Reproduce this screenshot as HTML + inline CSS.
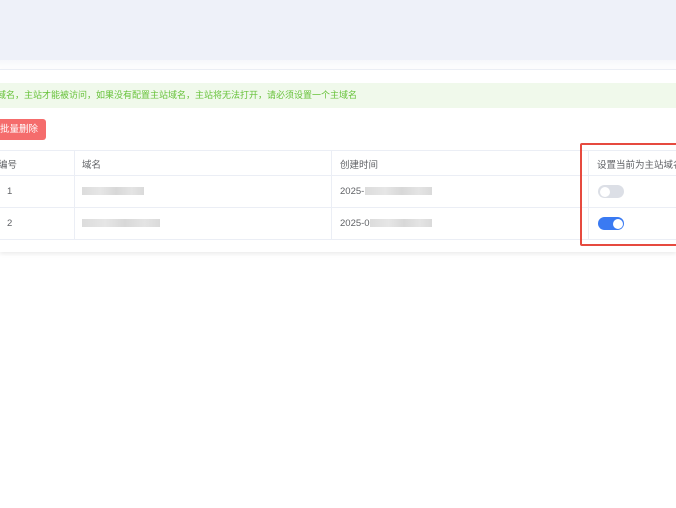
<!DOCTYPE html>
<html><head><meta charset="utf-8"><style>
*{margin:0;padding:0;box-sizing:border-box}
body{width:676px;height:508px;background:#fff;position:relative;overflow:hidden;font-family:"Liberation Sans","Noto Sans CJK SC",sans-serif;color:#606266}
.top{position:absolute;left:0;top:0;width:676px;height:60px;background:#eef1f9}
.gap{position:absolute;left:0;top:60px;width:676px;height:10px;background:linear-gradient(#f6f7fb,#fff)}
.panel{position:absolute;left:0;top:69px;width:676px;height:183px;background:#fff;box-shadow:0 2px 4px rgba(0,0,0,.08);border-top:1px solid #ebeef5}
.alert{position:absolute;left:0;top:83px;width:676px;height:25px;background:#f0f9eb;color:#67c23a;font-size:9px;line-height:25px;white-space:nowrap}
.alert span{position:absolute;left:-3px}
.btn{position:absolute;left:-6px;top:119px;width:52px;height:21px;background:#f56c6c;border-radius:3px;color:#fff;font-size:9.5px;line-height:21px;padding-left:6px}
.t{position:absolute;font-size:9.5px;white-space:nowrap}
.hl{position:absolute;left:0;width:676px;height:1px;background:#ebeef5}
.vl{position:absolute;top:150px;width:1px;height:90px;background:#ebeef5}
.blur{position:absolute;height:8px;background:linear-gradient(90deg,#dcdcdc,#e6e6e6 30%,#d8d8d8 55%,#e4e4e4 80%,#dadada)}
.sw{position:absolute;width:26px;height:13px;border-radius:7px}
.sw i{position:absolute;top:1.5px;width:10px;height:10px;border-radius:50%;background:#fff}
.red{position:absolute;left:580px;top:143px;width:100px;height:103px;border:2px solid #e64a3f;border-radius:2px}
</style></head><body>
<div class="top"></div><div class="gap"></div>
<div class="panel"></div>
<div class="alert"><span>域名，主站才能被访问，如果没有配置主站域名，主站将无法打开，请必须设置一个主域名</span></div>
<div class="btn">批量删除</div>
<div class="hl" style="top:150px"></div>
<div class="hl" style="top:175px"></div>
<div class="hl" style="top:207px"></div>
<div class="hl" style="top:239px"></div>
<div class="vl" style="left:74px"></div>
<div class="vl" style="left:331px"></div>
<div class="vl" style="left:588px"></div>
<div class="t" style="left:-2px;top:157px">编号</div>
<div class="t" style="left:82px;top:157px">域名</div>
<div class="t" style="left:340px;top:157px">创建时间</div>
<div class="t" style="left:597px;top:157px">设置当前为主站域名</div>
<div class="t" style="left:7px;top:186px">1</div>
<div class="t" style="left:7px;top:218px">2</div>
<div class="blur" style="left:82px;top:187px;width:62px"></div>
<div class="blur" style="left:82px;top:219px;width:78px"></div>
<div class="t" style="left:340px;top:186px">2025-</div>
<div class="blur" style="left:365px;top:187px;width:67px"></div>
<div class="t" style="left:340px;top:218px">2025-0</div>
<div class="blur" style="left:370px;top:219px;width:62px"></div>
<div class="sw" style="left:598px;top:185px;background:#dcdfe6"><i style="left:1.5px"></i></div>
<div class="sw" style="left:598px;top:217px;background:#3a7af2"><i style="left:14.5px"></i></div>
<div class="red"></div>
</body></html>
